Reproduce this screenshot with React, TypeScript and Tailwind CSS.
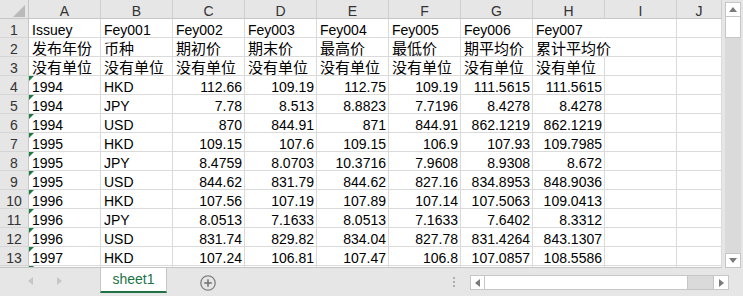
import React from "react";

const COLS = ["A", "B", "C", "D", "E", "F", "G", "H", "I", "J"];
const WIDTHS = ["w-[72px]", "w-[72px]", "w-[72px]", "w-[72px]", "w-[72px]", "w-[72px]", "w-[72px]", "w-[72px]", "w-[72px]", "w-[45px]"];

const HEAD_ROWS: string[][] = [
  ["Issuey", "Fey001", "Fey002", "Fey003", "Fey004", "Fey005", "Fey006", "Fey007"],
  ["发布年份", "币种", "期初价", "期末价", "最高价", "最低价", "期平均价", "累计平均价"],
  ["没有单位", "没有单位", "没有单位", "没有单位", "没有单位", "没有单位", "没有单位", "没有单位"],
];

const DATA_ROWS: string[][] = [
  ["1994", "HKD", "112.66", "109.19", "112.75", "109.19", "111.5615", "111.5615"],
  ["1994", "JPY", "7.78", "8.513", "8.8823", "7.7196", "8.4278", "8.4278"],
  ["1994", "USD", "870", "844.91", "871", "844.91", "862.1219", "862.1219"],
  ["1995", "HKD", "109.15", "107.6", "109.15", "106.9", "107.93", "109.7985"],
  ["1995", "JPY", "8.4759", "8.0703", "10.3716", "7.9608", "8.9308", "8.672"],
  ["1995", "USD", "844.62", "831.79", "844.62", "827.16", "834.8953", "848.9036"],
  ["1996", "HKD", "107.56", "107.19", "107.89", "107.14", "107.5063", "109.0413"],
  ["1996", "JPY", "8.0513", "7.1633", "8.0513", "7.1633", "7.6402", "8.3312"],
  ["1996", "USD", "831.74", "829.82", "834.04", "827.78", "831.4264", "843.1307"],
  ["1997", "HKD", "107.24", "106.81", "107.47", "106.8", "107.0857", "108.5586"],
];

function RowHead({ n }: { n?: number }) {
  return (
    <div className="w-[29px] h-[19px] shrink-0 border-r border-b border-r-[#c6c6c6] border-b-[#d6d6d6] bg-[#e6e6e6] text-center leading-[22px] text-[14px] text-[#333]">
      {n}
    </div>
  );
}

function TextRow({ n, cells }: { n: number; cells: string[] }) {
  const cjk = n > 1;
  return (
    <div className="flex">
      <RowHead n={n} />
      {COLS.map((c, i) => {
        const v = cells[i] ?? "";
        // long label in H spills over into the empty I cell
        const spill = c === "H" && v.length > 4;
        return (
          <div
            key={c}
            className={`${WIDTHS[i]} h-[19px] shrink-0 border-r border-b border-[#dadada] pl-[3px] whitespace-nowrap leading-[22px] ${cjk ? "text-[15px]" : "text-[14px]"} ${spill ? "border-r-white relative z-10" : ""}`}
          >
            {v}
          </div>
        );
      })}
    </div>
  );
}

function DataRow({ n, cells }: { n?: number; cells: string[] }) {
  return (
    <div className="flex">
      <RowHead n={n} />
      {COLS.map((c, i) => {
        const v = cells[i] ?? "";
        const right = i >= 2 && i <= 7;
        return (
          <div
            key={c}
            className={`${WIDTHS[i]} h-[19px] shrink-0 relative border-r border-b border-[#dadada] whitespace-nowrap leading-[22px] text-[14px] ${right ? "text-right pr-[2px]" : "pl-[3px]"}`}
          >
            {i === 0 && (
              <span className="absolute top-0 left-0 w-0 h-0 border-t-[5px] border-t-[#1b7a3e] border-r-[5px] border-r-transparent" />
            )}
            {v}
          </div>
        );
      })}
    </div>
  );
}

function Arrow({ dir, color }: { dir: "up" | "down" | "left" | "right"; color: string }) {
  const pts = {
    up: "0,5 8,5 4,0",
    down: "0,0 8,0 4,5",
    left: "5,0 5,8 0,4",
    right: "0,0 0,8 5,4",
  }[dir];
  const vertical = dir === "up" || dir === "down";
  return (
    <svg width={vertical ? 8 : 5} height={vertical ? 5 : 8} viewBox={vertical ? "0 0 8 5" : "0 0 5 8"}>
      <polygon points={pts} fill={color} />
    </svg>
  );
}

export default function App() {
  return (
    <div
      className="w-[743px] h-[296px] overflow-hidden bg-[#e6e6e6] flex flex-col text-black"
      style={{ fontFamily: '"Liberation Sans", "Noto Sans CJK SC", sans-serif' }}
    >
      {/* sheet area + vertical scrollbar */}
      <div className="flex h-[268px] shrink-0">
        <div className="w-[722px] h-[268px] shrink-0 overflow-hidden bg-white border-b border-[#c6c6c6]">
          {/* column headers */}
          <div className="flex">
            <div className="w-[29px] h-[19px] shrink-0 border-r border-b border-[#c6c6c6] bg-[#e6e6e6] flex items-end justify-end pr-[3px] pb-[1px]">
              <svg width="12" height="12" viewBox="0 0 12 12">
                <polygon points="12,0 12,12 0,12" fill="#b9b9b9" />
              </svg>
            </div>
            {COLS.map((c, i) => (
              <div
                key={c}
                className={`${WIDTHS[i]} h-[19px] shrink-0 border-r border-b border-r-[#d0d0d0] border-b-[#c6c6c6] bg-[#e6e6e6] text-center leading-[22px] text-[14px] text-[#333]`}
              >
                {c}
              </div>
            ))}
          </div>
          {HEAD_ROWS.map((r, i) => (
            <TextRow key={i} n={i + 1} cells={r} />
          ))}
          {DATA_ROWS.map((r, i) => (
            <DataRow key={i} n={i + 4} cells={r} />
          ))}
          {/* row 14, only its top edge shows */}
          <DataRow cells={[]} />
        </div>

        {/* vertical scrollbar */}
        <div className="flex-1 flex pl-[3px] pr-[2px] pt-[2px]">
          <div className="w-[16px] h-[266px] bg-[#dadada] flex flex-col">
            <div className="h-[15px] bg-white border border-[#c6c6c6] flex items-center justify-center">
              <Arrow dir="up" color="#7a7a7a" />
            </div>
            <div className="h-[21px] bg-white border border-t-0 border-[#c6c6c6]" />
            <div className="flex-1" />
            <div className="h-[15px] bg-white border border-[#c6c6c6] flex items-center justify-center">
              <Arrow dir="down" color="#7a7a7a" />
            </div>
          </div>
        </div>
      </div>

      {/* sheet tabs bar */}
      <div className="flex items-start h-[28px]">
        <div className="w-[100px] h-[25px] shrink-0 flex items-center">
          <div className="ml-[28px]">
            <Arrow dir="left" color="#c6c6c6" />
          </div>
          <div className="ml-[24px]">
            <Arrow dir="right" color="#c6c6c6" />
          </div>
        </div>
        <div className="w-[67px] h-[25px] shrink-0 bg-white border-x border-[#c6c6c6] border-b-2 border-b-[#217346] flex items-center justify-center text-[14px] text-[#217346]">
          sheet1
        </div>
        <div className="ml-[33px] mt-[7px]">
          <svg width="16" height="16" viewBox="0 0 16 16">
            <circle cx="8" cy="8" r="7.2" fill="none" stroke="#808080" strokeWidth="1.3" />
            <path d="M8 4.2 V11.8 M4.2 8 H11.8" stroke="#707070" strokeWidth="1.5" />
          </svg>
        </div>
        <div className="ml-[237px] mt-[9px] flex flex-col gap-[2px]">
          <span className="w-[2px] h-[2px] bg-[#b0b0b0]" />
          <span className="w-[2px] h-[2px] bg-[#b0b0b0]" />
          <span className="w-[2px] h-[2px] bg-[#b0b0b0]" />
        </div>
        {/* horizontal scrollbar */}
        <div className="ml-[15px] mt-[7px] w-[259px] h-[15px] flex border border-[#c6c6c6] bg-[#dadada]">
          <div className="w-[14px] h-full bg-white border-r border-[#c6c6c6] flex items-center justify-center">
            <Arrow dir="left" color="#7a7a7a" />
          </div>
          <div className="w-[203px] h-full bg-white border-r border-[#c6c6c6]" />
          <div className="flex-1" />
          <div className="w-[15px] h-full bg-white border-l border-[#c6c6c6] flex items-center justify-center">
            <Arrow dir="right" color="#7a7a7a" />
          </div>
        </div>
      </div>
    </div>
  );
}
